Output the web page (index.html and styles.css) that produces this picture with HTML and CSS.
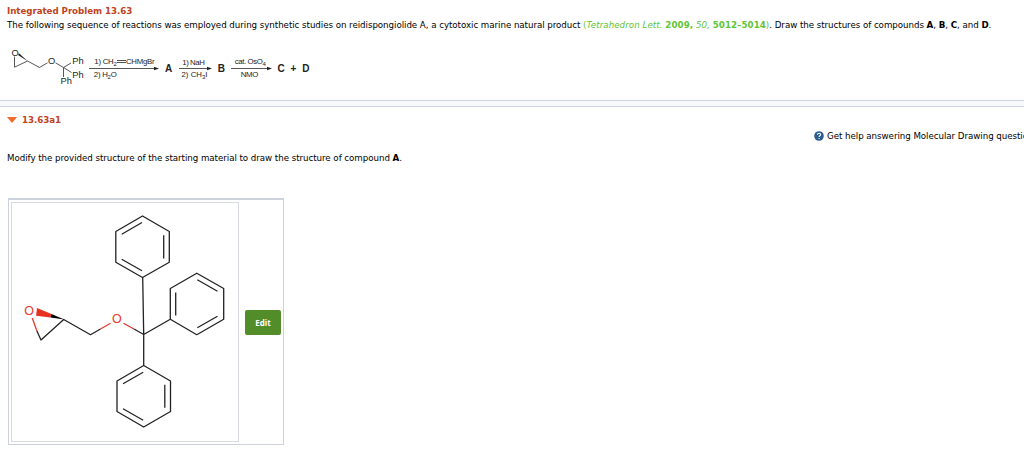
FILE: index.html
```html
<!DOCTYPE html>
<html lang="en">
<head>
  <meta charset="UTF-8">
  <title>Integrated Problem 13.63</title>
  <link rel="stylesheet" href="styles.css">
</head>
<body>
  <section class="problem">
    <h1 class="title">Integrated Problem 13.63</h1>
    <p class="intro">The following sequence of reactions was employed during synthetic studies on reidispongiolide A, a cytotoxic marine natural product <span class="cite">(<i>Tetrahedron Lett.</i> <b>2009,</b> <i>50,</i> <b>5012–5014</b>)</span>. Draw the structures of compounds <b>A</b>, <b>B</b>, <b>C</b>, and <b>D</b>.</p>
    <svg class="scheme" width="320" height="44" viewBox="0 44 320 44">
      <g class="thin">
        <path d="M14.5 56.5V67.2L27.5 61M27.5 61L39.5 67.5L47.5 62.8M55.5 62.8L63.5 67.5L71 63M63.5 67.5L71.5 72.5M63.5 67.5V77"/>
        <path d="M117 60.5h9M117 62.5h9"/>
        <path d="M89 68.5h66M179 68.5h30M231 68.5h38"/>
      </g>
      <path class="solid" d="M18 55L27.8 61.2L19 53.2z"/>
      <path class="solid" d="M154 66.7l5 1.8l-5 1.8zM207 66.7l5 1.8l-5 1.8zM267 66.7l5 1.8l-5 1.8z"/>
      <g class="atoms">
        <text x="11.6" y="56.3">O</text>
        <text x="48" y="63.7">O</text>
        <text x="72.3" y="63.8">Ph</text>
        <text x="72.3" y="78.1">Ph</text>
        <text x="60.5" y="84">Ph</text>
      </g>
      <g class="reagents">
        <text x="94.3" y="64" textLength="22.5">1) CH<tspan class="sub" dy="2">2</tspan></text>
        <text x="126" y="64" textLength="28.5">CHMgBr</text>
        <text x="93.8" y="77" textLength="23">2) H<tspan class="sub" dy="2">2</tspan><tspan dy="-2">O</tspan></text>
        <text x="182.3" y="64.5" textLength="22.5">1) NaH</text>
        <text x="181.5" y="77.3" textLength="26">2) CH<tspan class="sub" dy="2">3</tspan><tspan dy="-2">I</tspan></text>
        <text x="234.8" y="64" textLength="31">cat. OsO<tspan class="sub" dy="2">4</tspan></text>
        <text x="240.8" y="77" textLength="17.5">NMO</text>
      </g>
      <g class="labels">
        <text x="165" y="72.3">A</text>
        <text x="217.7" y="72.3">B</text>
        <text x="277.5" y="72.3">C</text>
        <text x="290.5" y="72">+</text>
        <text x="302.3" y="72.3">D</text>
      </g>
    </svg>
  </section>
  <div class="divider"></div>
  <section class="part">
    <h2 class="title part-title"><span class="arrow"></span>13.63a1</h2>
    <div class="help">
      <svg width="10" height="10" viewBox="0 0 10 10">
        <circle cx="5" cy="5" r="4.8" fill="#2b5c8c"/>
        <path d="M3.4 3.8C3.5 1.7 6.7 1.8 6.6 3.7C6.5 4.8 5.1 4.8 5.1 6M5.1 7v1.1" fill="none" stroke="#fff" stroke-width="1.1"/>
      </svg>
      <span>Get help answering Molecular Drawing questions.</span>
    </div>
    <p class="task">Modify the provided structure of the starting material to draw the structure of compound <b>A</b>.</p>
    <div class="editor">
      <div class="canvas">
        <svg width="226" height="238" viewBox="12 203 226 238">
          <g class="bonds">
            <path d="M142.5 216L169.3 231.5V262.2L142.5 277.5L115.8 262.2V231.5z"/>
            <path d="M142 222.5L121.7 234.3M121.7 259.3L142 270.8M163.7 235.3V258.5"/>
            <path d="M196.8 273.2L223.7 288.5V319.3L196.8 334.7L170.3 319.3V288.5z"/>
            <path d="M197.3 279.7L217.5 291.3M217.5 316.3L197.3 327.8M175.7 292.5V315.5"/>
            <path d="M143.7 365.5L170.5 381V411.5L143.7 427L117 411.5V381z"/>
            <path d="M143.2 372.2L123 383.8M123 408.7L143.2 420.3M164.8 384.8V407.8"/>
            <path d="M142.7 277.5L143.7 334.5V365.5M143.7 334.5L170.3 319.3M143.7 334.5L134 329"/>
            <path d="M36.7 330.5L41 340L63.7 319.5L90.5 334.7L100.5 329"/>
          </g>
          <path class="red" d="M32.3 318L36.7 330.5M100.5 329L110.5 323.2M123.5 323.2L134 329"/>
          <path class="wedge" d="M37 308L51.5 314L50.5 317.5L36 315.8z"/>
          <path class="wedge-tip" d="M51.5 314L64.3 319.5L50.5 317.5z"/>
          <text x="24.3" y="314.6">O</text>
          <text x="112" y="323.3">O</text>
        </svg>
      </div>
      <button class="edit">Edit</button>
    </div>
  </section>
</body>
</html>
```
FILE: styles.css
```css
body { margin: 0; background: #fff; color: #000; font-family: "DejaVu Sans", Verdana, sans-serif; font-size: 8.7px; letter-spacing: -0.05px; overflow: hidden; }
p, h1, h2 { margin: 0; white-space: nowrap; }
svg { display: block; letter-spacing: 0; }

.problem { height: 95px; padding: 5px 0 0 7px; }
.title { height: 12px; line-height: 12px; font-size: 8.7px; color: #c0431c; }
.intro { height: 14px; line-height: 14px; margin-top: 1px; }
.cite { color: #5dc437; letter-spacing: 0.05px; }
.scheme { margin: 12px 0 0 -7px; }
.thin { fill: none; stroke: #444; stroke-width: 0.9; }
.solid { fill: #222; }
.scheme text { font-family: "Liberation Sans", Arial, sans-serif; fill: #222; }
.atoms { font-size: 9.3px; }
.reagents { font-size: 7.8px; }
.reagents .sub { font-size: 6px; }
.labels { font-size: 10px; font-weight: bold; }

.divider { height: 5px; background: #f7f9fa; border-top: 1px solid #cdd4e3; border-bottom: 1px solid #cdd4e3; }

.part { padding: 7px 0 0 7px; }
.part-title { display: flex; align-items: center; gap: 5px; }
.arrow { border: 5px solid transparent; border-top: 6px solid #f26a2a; border-bottom: 0; }
.help { display: flex; align-items: center; gap: 3px; height: 12px; margin: 4px 0 0 807px; white-space: nowrap; }
.help svg { flex: none; }
.task { height: 14px; line-height: 14px; margin-top: 9px; }

.editor { display: flex; align-items: center; box-sizing: border-box; width: 276px; height: 247px; margin: 33px 0 0 1px; padding: 0 2px; border: 1px solid #cdd0dd; border-top: 2px solid #cdd2df; }
.canvas { border: 1px solid #d8dbe6; }
.bonds { fill: none; stroke: #222; stroke-width: 1.3; stroke-linejoin: round; }
.red { fill: none; stroke: #e8382c; stroke-width: 1.3; }
.wedge { fill: #e63223; }
.wedge-tip { fill: #000; }
.canvas text { font: 12.5px "Liberation Sans", Arial, sans-serif; fill: #e8382c; }
.edit { width: 36px; height: 25px; margin-left: 6px; padding: 0; border: 0; border-radius: 2px; background: #528d2a; color: #fff; font: bold 8px "Open Sans", sans-serif; }
```
